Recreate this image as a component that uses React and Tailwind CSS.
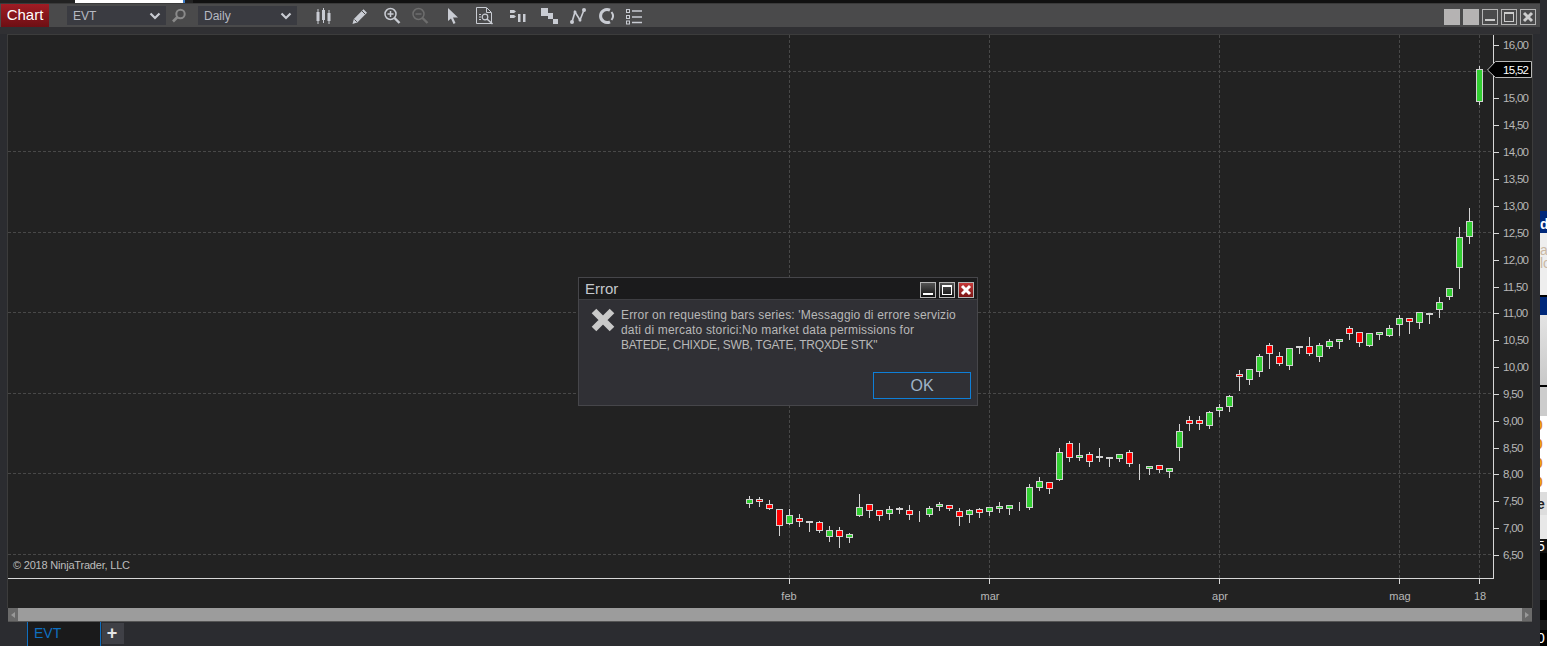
import React from "react";

// wick top, wick bottom, body top, body bottom, color (one candle every 10px from x=749)
const candles = [
  [496, 507, 499, 503, "g"], [497, 506, 499, 501, "r"], [500, 509, 504, 508, "r"], [509, 535, 509, 525, "r"],
  [509, 524, 515, 523, "g"], [514, 526, 518, 521, "r"], [521, 531, 521, 522, "d"], [521, 532, 522, 530, "r"],
  [526, 541, 530, 536, "g"], [527, 547, 530, 536, "r"], [533, 542, 534, 537, "g"], [494, 516, 507, 515, "g"],
  [504, 517, 504, 510, "r"], [510, 520, 510, 515, "r"], [506, 519, 509, 513, "g"], [507, 513, 508, 509, "d"],
  [505, 519, 510, 514, "r"], [511, 521, 512, 512, "d"], [506, 516, 508, 514, "g"], [502, 510, 504, 506, "g"],
  [505, 510, 505, 508, "r"], [508, 525, 511, 516, "r"], [509, 522, 510, 514, "g"], [508, 517, 509, 512, "r"],
  [507, 515, 507, 511, "g"], [502, 512, 506, 508, "g"], [505, 514, 505, 508, "g"], [502, 510, 507, 507, "d"],
  [484, 509, 487, 507, "g"], [477, 490, 481, 487, "g"], [482, 493, 482, 488, "r"], [448, 480, 452, 479, "g"],
  [441, 461, 443, 457, "r"], [443, 460, 455, 457, "g"], [452, 466, 454, 461, "r"], [448, 461, 456, 457, "d"],
  [457, 466, 457, 458, "d"], [454, 461, 454, 458, "g"], [450, 466, 452, 463, "r"], [464, 479, 468, 468, "d"],
  [466, 474, 466, 468, "g"], [465, 472, 465, 469, "r"], [468, 477, 468, 471, "g"], [424, 460, 431, 447, "g"],
  [416, 430, 420, 423, "r"], [416, 429, 420, 423, "r"], [411, 428, 412, 425, "g"], [404, 416, 407, 410, "g"],
  [395, 411, 396, 406, "g"], [370, 390, 374, 376, "r"], [369, 384, 369, 379, "g"], [354, 376, 356, 371, "g"],
  [343, 368, 345, 353, "r"], [352, 365, 356, 363, "r"], [348, 369, 348, 365, "g"], [346, 353, 346, 347, "d"],
  [337, 355, 346, 353, "r"], [343, 361, 345, 356, "g"], [339, 348, 341, 346, "g"], [339, 348, 339, 341, "g"],
  [326, 339, 328, 333, "r"], [332, 346, 332, 342, "r"], [333, 346, 333, 345, "g"], [332, 339, 332, 334, "g"],
  [325, 336, 328, 335, "g"], [315, 335, 318, 324, "g"], [318, 333, 318, 321, "r"], [312, 328, 312, 322, "g"],
  [313, 323, 313, 314, "d"], [297, 317, 302, 309, "g"], [288, 299, 288, 296, "g"], [227, 288, 237, 267, "g"],
  [208, 243, 221, 236, "g"], [66, 104, 69, 101, "g"],
];

const hLines = [71, 151, 232, 312, 393, 473, 554];
const vLines = [789, 989, 1219, 1399, 1479];
const prices = [
  ["16,00", 45], ["15,00", 98], ["14,50", 125], ["14,00", 152], ["13,50", 179], ["13,00", 206],
  ["12,50", 233], ["12,00", 260], ["11,50", 287], ["11,00", 313], ["10,50", 340], ["10,00", 367], ["9,50", 394],
  ["9,00", 421], ["8,50", 448], ["8,00", 474], ["7,50", 501], ["7,00", 528], ["6,50", 555],
];
const months = [["feb", 789, 789], ["mar", 990, 989], ["apr", 1220, 1219], ["mag", 1400, 1399], ["18", 1480, 1479]];

const fillColor = { g: "#32cd32", r: "#ff0000", d: "#d3d3d3" };

const ChartDrawing = () => (
  <svg viewBox="8 35 1524 573" width="1524" height="573" className="block" style={{ fontFamily: '"Liberation Sans", Arial, sans-serif' }}>
    {hLines.map((y) => (
      <line key={y} x1="8" x2="1493" y1={y + 0.5} y2={y + 0.5} stroke="#484848" strokeDasharray="3 2" />
    ))}
    {vLines.map((x) => (
      <line key={x} x1={x + 0.5} x2={x + 0.5} y1="35" y2="578" stroke="#484848" strokeDasharray="3 2" />
    ))}
    {candles.map(([wt, wb, bt, bb, c], i) => {
      const x = 749 + i * 10;
      return (
        <g key={i}>
          <line x1={x + 0.5} x2={x + 0.5} y1={wt} y2={wb + 1} stroke="#d3d3d3" />
          <rect x={x - 2.5} y={bt + 0.5} width="6" height={bb - bt} fill={fillColor[c]} stroke="#d3d3d3" />
        </g>
      );
    })}
    <line x1="8" x2="1494" y1="578.5" y2="578.5" stroke="#d8d8d8" />
    <line x1="1493.5" x2="1493.5" y1="35" y2="579" stroke="#d8d8d8" />
    {prices.map(([t, y]) => (
      <g key={t}>
        <line x1="1494" x2="1499" y1={y + 0.5} y2={y + 0.5} stroke="#d8d8d8" />
        <text x="1503" y={y + 4} fontSize="11.5" letterSpacing="-0.7" fill="#b8b8b8">{t}</text>
      </g>
    ))}
    <polygon points="1487.5,70 1495.5,61.5 1531.5,61.5 1531.5,77.5 1495.5,77.5" fill="#000" stroke="#b8b8b8" />
    <text x="1503" y="74" fontSize="11.5" letterSpacing="-0.7" fill="#fff">15,52</text>
    {months.map(([t, x, tick]) => (
      <g key={t}>
        <line x1={tick + 0.5} x2={tick + 0.5} y1="579" y2="584" stroke="#d8d8d8" />
        <text x={x} y="600" fontSize="11" textAnchor="middle" fill="#b8b8b8">{t}</text>
      </g>
    ))}
  </svg>
);

const icon = "#c9ccd3";

const Icon = ({ children, className = "" }) => (
  <svg viewBox="0 0 18 18" width="18" height="18" className={`shrink-0 ${className}`}>{children}</svg>
);

const Chevron = () => (
  <svg viewBox="0 0 12 8" width="12" height="8">
    <path d="M1.5 1.5 L6 6 L10.5 1.5" fill="none" stroke="#c9ccd3" strokeWidth="2.2" />
  </svg>
);

const Dropdown = ({ label, className = "" }) => (
  <div className={`w-[99px] h-[19px] bg-[#3a3b41] flex items-center justify-between pl-[6px] pr-[5px] text-[12px] text-[#b6b9c2] ${className}`}>
    <span>{label}</span>
    <Chevron />
  </div>
);

const WinButton = ({ children, className = "" }) => (
  <div className={`w-[16px] h-[16px] border border-[#b5b5b5] flex items-center justify-center ${className}`}>{children}</div>
);

const StripBlock = ({ className, children }) => (
  <div className={`shrink-0 overflow-hidden ${className}`}>{children}</div>
);

export default function App() {
  return (
    <div className="relative w-[1547px] h-[646px] flex overflow-hidden bg-[#2b2c30]" style={{ fontFamily: '"Liberation Sans", Arial, sans-serif' }}>
      <div className="w-[1540px] h-full flex flex-col shrink-0">
        {/* sliver of the window behind */}
        <div className="h-[3px] flex shrink-0 bg-[#222]">
          <div className="w-[75px]" />
          <div className="w-[108px] bg-white" />
          <div className="w-[2px] bg-[#3a7bc8]" />
          <div className="w-[8px]" />
          <div className="flex-1 bg-[#111]" />
        </div>

        {/* toolbar */}
        <div className="h-[24px] shrink-0 flex items-center pl-px pr-[4px] bg-[#4a4a4b] border-t border-[#3a3a3a]">
          <div className="w-[48px] h-[23px] flex items-center justify-center text-[15px] text-white bg-gradient-to-b from-[#a01c24] to-[#6e0f14]">Chart</div>
          <Dropdown label="EVT" className="ml-[18px]" />
          <Icon className="ml-[4px]">
            <circle cx="10.5" cy="7" r="4.2" fill="none" stroke="#8a8a8a" strokeWidth="2" />
            <path d="M7.5 10 L3 14.5" stroke="#8a8a8a" strokeWidth="2.6" />
          </Icon>
          <Dropdown label="Daily" className="ml-[10px]" />

          <Icon className="ml-[17px]">
            <path d="M4 2 V17 M9.5 1 V16 M15 3 V17" stroke={icon} strokeWidth="1" />
            <rect x="2.5" y="5" width="3" height="9" fill={icon} />
            <rect x="8" y="3" width="3" height="10" fill={icon} />
            <rect x="13.5" y="6" width="3" height="8" fill={icon} />
          </Icon>
          <Icon className="ml-[19px]">
            <path d="M1.5 17 L2.8 12 L12.5 2.2 L16 5.7 L6.3 15.5 Z" fill={icon} />
            <path d="M11 4 L14.2 7.2 M3.5 12.5 L5.8 14.8" stroke="#4a4a4b" />
          </Icon>
          <Icon className="ml-[14px]">
            <circle cx="7.5" cy="7" r="5.5" fill="none" stroke={icon} strokeWidth="1.5" />
            <path d="M4.5 7 H10.5 M7.5 4 V10" stroke={icon} strokeWidth="1.5" />
            <path d="M11.5 11 L16.5 16" stroke={icon} strokeWidth="2.4" />
          </Icon>
          <Icon className="ml-[10px]">
            <circle cx="7.5" cy="7" r="5.5" fill="none" stroke="#6d6d6d" strokeWidth="1.5" />
            <path d="M4.5 7 H10.5" stroke="#6d6d6d" strokeWidth="1.5" />
            <path d="M11.5 11 L16.5 16" stroke="#6d6d6d" strokeWidth="2.4" />
          </Icon>
          <Icon className="ml-[15px]">
            <path d="M4 1 L4 14 L7 11.5 L9.5 17 L11.5 16 L9 10.5 L14 10.5 Z" fill={icon} />
          </Icon>
          <Icon className="ml-[14px]">
            <path d="M0.5 0.5 H10.5 L15.5 5.5 V16.5 H0.5 Z" fill="none" stroke={icon} />
            <path d="M10.5 1 V5.5 H15 M3 7.5 H5 M3 10 H5 M3 12.5 H5" fill="none" stroke={icon} />
            <circle cx="9" cy="10" r="2.8" fill="none" stroke={icon} strokeWidth="1.2" />
            <path d="M11 12 L16.5 17" stroke={icon} strokeWidth="1.6" />
          </Icon>
          <Icon className="ml-[15px]">
            <path d="M1 3 H5 L7 4.5 L5 6 H1 Z M1 8 H5 L7 9.5 L5 11 H1 Z" fill={icon} />
            <rect x="9" y="7" width="2.5" height="8" fill={icon} />
            <rect x="14" y="7" width="2.5" height="8" fill={icon} />
          </Icon>
          <Icon className="ml-[14px]">
            <rect x="0" y="1" width="7" height="8" fill={icon} />
            <rect x="7" y="6" width="5" height="6" fill={icon} />
            <rect x="12" y="12" width="5" height="5" fill={icon} />
          </Icon>
          <Icon className="ml-[10px]">
            <path d="M3 15 L6 5 L11 13 L15 3" fill="none" stroke={icon} strokeWidth="1.6" />
            <circle cx="3" cy="15" r="2" fill={icon} />
            <circle cx="6" cy="5" r="1.5" fill={icon} />
            <circle cx="11" cy="13" r="1.5" fill={icon} />
            <circle cx="15" cy="3" r="2" fill={icon} />
          </Icon>
          <Icon className="ml-[10px]">
            <path d="M13 3.2 A6.5 6.5 0 1 0 13 14.8" fill="none" stroke={icon} strokeWidth="3" />
            <path d="M14.5 5 A6.5 6.5 0 0 1 14.5 13" fill="none" stroke={icon} strokeWidth="2" />
          </Icon>
          <Icon className="ml-[10px]">
            <rect x="1.5" y="2.5" width="3" height="3" fill="none" stroke={icon} />
            <rect x="1.5" y="8.5" width="3" height="3" fill="none" stroke={icon} />
            <rect x="1.5" y="14" width="3" height="3" fill="none" stroke={icon} />
            <path d="M7 4 H17 M7 10 H17 M7 15.5 H17" stroke={icon} strokeWidth="1.6" />
          </Icon>

          <div className="ml-auto mt-[2px] flex gap-[3px]">
            <WinButton className="bg-[#b5b3b3]" />
            <WinButton className="bg-[#b5b3b3]" />
            <WinButton className="items-end pb-[3px]"><div className="w-[10px] h-[2px] bg-[#ccc]" /></WinButton>
            <WinButton><div className="w-[10px] h-[10px] border border-[#ccc] border-t-2" /></WinButton>
            <WinButton>
              <svg viewBox="0 0 12 12" width="12" height="12"><path d="M2 2 L10 10 M10 2 L2 10" stroke="#ccc" strokeWidth="3" /></svg>
            </WinButton>
          </div>
        </div>

        <div className="h-[7px] shrink-0 bg-[#303033]" />

        {/* chart panel */}
        <div className="flex-1 min-h-0 flex pl-[7px] pr-[7px]">
          <div className="flex-1 min-w-0 flex flex-col">
            <div className="relative h-[573px] shrink-0 bg-[#222222] border-t border-l border-r border-[#3c3c3c] box-content">
              <ChartDrawing />
              <div className="absolute left-[5px] top-[523px] text-[11px] leading-[14px] tracking-[-0.2px] text-[#bdbdbd]">© 2018 NinjaTrader, LLC</div>
            </div>
            {/* scrollbar */}
            <div className="h-[14px] shrink-0 mx-px flex justify-between bg-[#9c9c9c] border-b border-[#555]">
              <div className="w-[10px] h-full bg-[#6a6a6a] flex items-center justify-center">
                <div className="w-0 h-0 border-y-[3px] border-y-transparent border-r-[4px] border-r-[#999]" />
              </div>
              <div className="w-[10px] h-full bg-[#6a6a6a] flex items-center justify-center">
                <div className="w-0 h-0 border-y-[3px] border-y-transparent border-l-[4px] border-l-[#999]" />
              </div>
            </div>
            {/* tabs */}
            <div className="flex-1 flex pl-[20px]">
              <div className="w-[74px] bg-[#1a1a1b] border-x border-[#0f6fc0] pl-[6px] text-[14px] leading-[22px] text-[#0f6fc0]">EVT</div>
              <div className="ml-px mt-px w-[22px] h-[21px] bg-[#3f4046] flex items-center justify-center text-[18px] font-bold leading-none pb-[2px] pr-[2px] text-[#e6e6e6]">+</div>
            </div>
          </div>
        </div>
      </div>

      {/* what shows of the application behind */}
      <div className="flex-1 flex flex-col text-[14px] font-bold">
        <StripBlock className="h-[211px] bg-[#2b2c30]" />
        <StripBlock className="h-[22px] bg-[#00287a] text-white leading-[20px] pt-[3px]">d</StripBlock>
        <StripBlock className="h-[62px] bg-[#eeeeee] text-[#c9b8a4] font-normal pt-[11px] leading-[13px]">a<br />lo</StripBlock>
        <StripBlock className="h-[2px] bg-black" />
        <StripBlock className="h-[18px] bg-[#00287a]" />
        <StripBlock className="h-[70px] bg-gradient-to-b from-[#e4e4e4] to-[#c8c8c8]" />
        <StripBlock className="h-[2px] bg-black" />
        <StripBlock className="h-[29px] bg-[#cccccc]" />
        <StripBlock className="h-[76px] bg-white text-[#e08a10] pt-[0px]">
          <div className="-ml-[5px] leading-[19px]">0<br />0<br />0<br />0</div>
        </StripBlock>
        <StripBlock className="h-[23px] bg-[#dddddd] text-[#222]">
          <div className="-ml-[3px] leading-[20px] pt-[2px]">e</div>
        </StripBlock>
        <StripBlock className="h-[24px] bg-[#e8e8e8]" />
        <StripBlock className="h-[14px] bg-[#111] text-white font-normal">
          <div className="-ml-[3px] leading-[14px]">5</div>
        </StripBlock>
        <StripBlock className="h-[27px] bg-black" />
        <StripBlock className="h-[20px] bg-[#1a1a1a]" />
        <StripBlock className="h-[20px] bg-black" />
        <StripBlock className="h-[10px] bg-[#1a1a1a]" />
        <StripBlock className="flex-1 bg-black text-white font-normal">
          <div className="-ml-[3px] leading-[14px] pt-[1px]">0</div>
        </StripBlock>
      </div>

      {/* error dialog */}
      <div className="absolute left-[578px] top-[277px] w-[400px] h-[129px] flex flex-col bg-[#303035] border border-[#46464a]">
        <div className="h-[22px] shrink-0 flex items-center justify-between bg-[#1b1b1c] border-b border-[#3e3e42] pl-[6px] pr-[3px] pt-[2px]">
          <span className="text-[15px] text-[#c4c8cc]">Error</span>
          <div className="flex gap-[3px]">
            <div className="w-[16px] h-[16px] border border-[#b5b5b5] bg-gradient-to-b from-[#555] to-[#111] flex items-end justify-center pb-[2px]"><div className="w-[10px] h-[2px] bg-white" /></div>
            <div className="w-[16px] h-[16px] border border-[#b5b5b5] bg-gradient-to-b from-[#555] to-[#111] flex items-center justify-center"><div className="w-[10px] h-[10px] border border-white border-t-2" /></div>
            <div className="w-[16px] h-[16px] border border-[#b5b5b5] bg-gradient-to-b from-[#c83a3a] to-[#7a1414] flex items-center justify-center">
              <svg viewBox="0 0 12 12" width="12" height="12"><path d="M2 2 L10 10 M10 2 L2 10" stroke="#fff" strokeWidth="3" /></svg>
            </div>
          </div>
        </div>
        <div className="flex-1 relative flex pl-[12px] pt-[6px]">
          <svg viewBox="0 0 24 24" width="24" height="24" className="shrink-0 mt-[2px]">
            <path d="M3 3 L21 21 M21 3 L3 21" stroke="#c9c9c9" strokeWidth="6.5" />
          </svg>
          <p className="ml-[6px] mt-[2px] w-[345px] text-[12px] leading-[15px] tracking-[0.18px] text-[#b8b8b8]">
            Error on requesting bars series: 'Messaggio di errore servizio dati di mercato storici:No market data permissions for <span className="tracking-[-0.25px]">BATEDE, CHIXDE, SWB, TGATE, TRQXDE STK"</span>
          </p>
          <button className="absolute left-[294px] top-[72px] w-[98px] h-[27px] border border-[#0e7fd8] text-[16px] text-[#9fb4c8]">OK</button>
        </div>
      </div>
    </div>
  );
}
